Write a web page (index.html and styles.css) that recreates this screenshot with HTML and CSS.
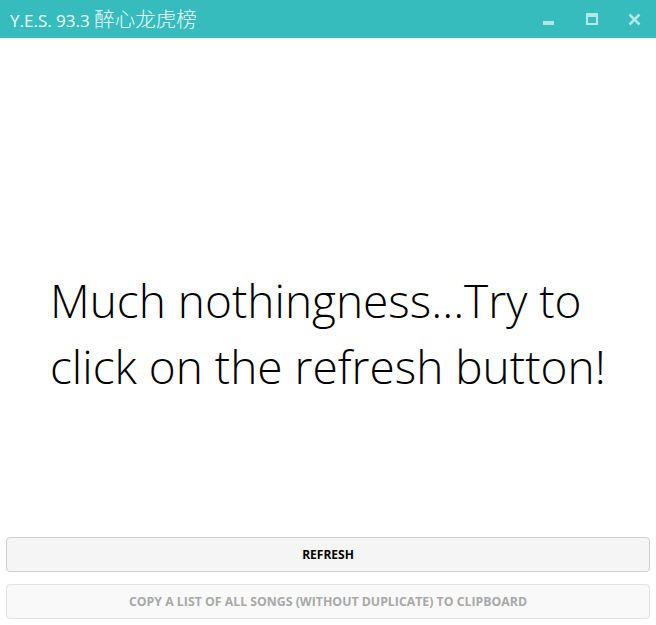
FILE: index.html
```html
<!DOCTYPE html>
<html>
<head>
<meta charset="utf-8">
<link rel="stylesheet" href="styles.css">
</head>
<body>
<div class="window">
  <header class="titlebar">
    <span class="title">Y.E.S. 93.3 <span class="cjk">醉心龙虎榜</span></span>
    <div class="controls">
      <span class="ctl"><svg width="11" height="11" viewBox="0 0 11 11"><rect x="0" y="7" width="11" height="4" fill="currentColor"/></svg></span>
      <span class="ctl"><svg width="12" height="12" viewBox="0 0 12 12"><path d="M0 0H12V12H0Z M2 4V10H10V4Z" fill="currentColor" fill-rule="evenodd"/></svg></span>
      <span class="ctl"><svg width="13" height="13" viewBox="0 0 13 13"><path d="M1.5 1.5L11.5 11.5M11.5 1.5L1.5 11.5" stroke="currentColor" stroke-width="2.6"/></svg></span>
    </div>
  </header>
  <main class="content">
    <p class="empty">Much nothingness...Try to click on the refresh button!</p>
  </main>
  <footer class="actions">
    <button class="btn">REFRESH</button>
    <button class="btn disabled">COPY A LIST OF ALL SONGS (WITHOUT DUPLICATE) TO CLIPBOARD</button>
  </footer>
</div>
</body>
</html>
```
FILE: styles.css
```css
html, body {
  margin: 0;
  padding: 0;
  height: 100%;
  background: #ffffff;
}
.window {
  display: flex;
  flex-direction: column;
  height: 625px;
  width: 656px;
}
.titlebar {
  height: 38px;
  background: #36bcbc;
  display: flex;
  align-items: center;
  justify-content: space-between;
  padding: 0 0 0 10px;
  box-sizing: border-box;
}
.title {
  color: #eef9f9;
  font-family: "Open Sans", "Noto Sans CJK SC", sans-serif;
  font-size: 17px;
  margin-top: -2px;
}
.cjk {
  font-family: "Noto Sans CJK SC", sans-serif;
  font-size: 20.5px;
  font-weight: 300;
}
.controls {
  display: flex;
  align-items: center;
  height: 100%;
}
.ctl {
  width: 43px;
  height: 38px;
  display: flex;
  align-items: center;
  justify-content: center;
  color: #b3e6e6;
}
.ctl:first-child {
  padding-left: 4px;
}
.content {
  flex: 1;
  display: flex;
  align-items: center;
  padding: 90px 40px 0 50px;
}
.empty {
  margin: 0;
  font-family: "Open Sans", sans-serif;
  font-weight: 300;
  font-size: 46px;
  line-height: 66px;
  color: #000;
}
.actions {
  display: flex;
  flex-direction: column;
  gap: 12px;
  padding: 0 6px 6px 6px;
}
.btn {
  height: 35px;
  border: 1px solid #cfcfcf;
  border-radius: 4px;
  background: #f5f5f5;
  font-family: "Open Sans", sans-serif;
  font-weight: 700;
  font-size: 12px;
  color: #000;
  padding: 0;
}
.btn.disabled {
  border-color: #e3e3e3;
  background: #f9f9f9;
  color: #a8a8a8;
  font-size: 12.3px;
}
```
